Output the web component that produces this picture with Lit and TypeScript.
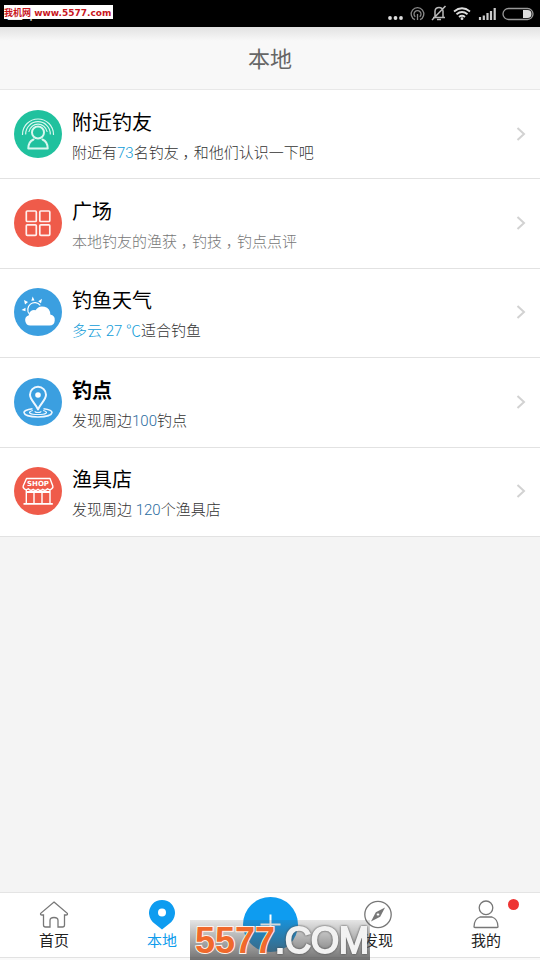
import { LitElement, html, css, svg, nothing } from "lit";
import type { TemplateResult } from "lit";
import { customElement, property } from "lit/decorators.js";
import { classMap } from "lit/directives/class-map.js";

type Row = {
  tone: string;
  icon: TemplateResult;
  title: string;
  strong?: boolean;
  muted?: boolean;
  text: TemplateResult;
};

const nearbyIcon = svg`
  <g fill="none" stroke="#d9f7ef" stroke-linecap="round">
    <path stroke-width="1.2" d="M8.500 24.500A15.500 15.500 0 0 1 39.500 24.500"/>
    <path stroke-width="1.200" d="M11.700 24A12.200 12.200 0 0 1 36.300 24"/>
    <path stroke-width="1.200" d="M15 21.500A9.200 9.200 0 0 1 33 21.500"/>
    <circle cx="24" cy="22.500" r="6" stroke-width="2"/>
    <path stroke-width="2" stroke-linejoin="round" d="M19.500 29.500C16 31 14.300 34 14.300 38.500H33.700C33.700 34 32 31 28.500 29.500"/>
  </g>`;

const squareIcon = svg`
  <g fill="none" stroke="#fff0ee" stroke-width="1.700">
    <rect x="12.300" y="12" width="10" height="10.500" rx="1"/>
    <rect x="25.800" y="12" width="10" height="10.500" rx="1"/>
    <rect x="12.300" y="25.800" width="10" height="10.500" rx="1"/>
    <rect x="25.800" y="25.800" width="10" height="10.500" rx="1"/>
  </g>`;

const weatherIcon = svg`
  <path d="M15.300 26A7 7 0 1 1 26.300 17.300" fill="none" stroke="#fff" stroke-width="1.200"/>
  <g fill="#fff">
    <path d="M17.300 12.700L18.700 8.500L20.500 12.500zM24.200 13.300L28 10.800L27 15.200zM11 16.500L10 12L14 14zM11.500 23.300L7.500 22L11.500 19.800z"/>
    <path d="M17 37.500A5.300 5.300 0 0 1 14.800 27.200A5.200 5.200 0 0 1 21.500 22.300A8 8 0 0 1 36.300 26.600A5.500 5.500 0 0 1 35.500 37.500z"/>
  </g>`;

const spotIcon = svg`
  <g fill="none" stroke="#eef7ff">
    <path stroke-width="1.600" d="M18.500 30.800C12 31.500 9.800 33.200 10 34.600C10.500 37.500 17 39 24 39S37.500 37.500 38 34.600C38 33.200 36 31.500 29.500 30.800"/>
    <path stroke-width="1.200" d="M18.800 32.500C12.500 34.300 16 36.500 24 36.500S35.500 34.300 29.200 32.500"/>
    <path stroke-width="1.200" d="M21 33.200Q21 34.500 24 34.500T27 33.200"/>
    <path stroke-width="2" stroke-linejoin="round" d="M24 31.500C22 26 16 22 16 16.800A8 8 0 0 1 32 16.800C32 22 26 26 24 31.500z"/>
    <circle cx="24" cy="17" r="2.800" fill="#fff" stroke="none"/>
  </g>`;

const shopIcon = svg`
  <g fill="none" stroke="#fff" stroke-width="1.400" stroke-linejoin="round">
    <path d="M12.500 11.500H36L38.800 19V20.500Q36.500 24 33.500 21.800Q31 24.500 28.700 22.300Q26.300 24.500 24 22.300Q21.600 24.500 19.200 22.300Q17 24.500 14.300 21.800Q11.500 24 9.200 20.500V19z"/>
    <path d="M12.300 22.500V36M20 23.500V36M28 23.500V36M36 22.500V36"/>
    <path stroke-width="1.800" d="M12.300 25H36M9.500 36.800H38.800"/>
  </g>
  <text class="shop" x="24" y="18.500" text-anchor="middle">SHOP</text>`;

const comma = html`<span class="comma">，</span>`;

const rows: Row[] = [
  { tone: "green", icon: nearbyIcon, title: "附近钓友",
    text: html`附近有<span class="cyan">73</span>名钓友${comma}和他们认识一下吧` },
  { tone: "red", icon: squareIcon, title: "广场", muted: true,
    text: html`本地钓友的渔获${comma}钓技${comma}钓点点评` },
  { tone: "blue", icon: weatherIcon, title: "钓鱼天气",
    text: html`<span class="cyan">多云 27 ℃</span>适合钓鱼` },
  { tone: "blue", icon: spotIcon, title: "钓点", strong: true,
    text: html`发现周边<span class="steel">100</span>钓点` },
  { tone: "red", icon: shopIcon, title: "渔具店",
    text: html`发现周边 <span class="steel">120</span>个渔具店` },
];

const homeIcon = svg`<path d="M15 3L28.300 14.300Q29 16 27 16H25.500V26Q25.500 28 23.500 28H19V21.500Q19 18.500 15 18.500T11 21.500V28H6.500Q4.500 28 4.500 26V16H3Q1 16 1.700 14.300z"/>`;
const pinIcon = svg`<path class="solid" d="M15 30.500L7.500 24.500A13 13 0 1 1 22.500 24.500z"/><circle class="hole" cx="15" cy="13.500" r="4"/>`;
const compassIcon = svg`<circle cx="15" cy="15.500" r="13.200"/><path class="needle" d="M22 8.500L17.200 17.700L8 22.500L12.800 13.300z"/><circle class="eye" cx="15" cy="15.500" r="1.700"/>`;
const meIcon = svg`<circle cx="15" cy="8.800" r="6.800"/><path d="M9 18H21Q27 20 27 28Q27 28.500 26 28.500H4Q3 28.500 3 28Q3 20 9 18z"/>`;

@customElement("status-bar")
class StatusBar extends LitElement {
  static styles = css`
    :host {
      display: flex;
      position: relative;
      justify-content: space-between;
      height: 27px;
      padding: 0 6px 0 7px;
      background: #000;
      color: #eee;
      font: 16px/28px Roboto, "Noto Sans CJK SC", sans-serif;
    }
    .signals { display: block; flex: none; }
    .site {
      position: absolute;
      left: 4px;
      top: 5px;
      width: 109px;
      height: 14px;
      background: #fff;
      color: #c8161d;
      font: bold 9px/16px "DejaVu Sans", "Noto Sans CJK SC", sans-serif;
      white-space: nowrap;
      text-decoration: none;
    }
  `;
  render() {
    return html`
      <span class="time">上午10:52</span>
      <svg class="signals" width="148" height="27" viewBox="386 0 148 27" aria-hidden="true">
        <g fill="#ddd"><circle cx="390" cy="18" r="1.900"/><circle cx="395.500" cy="18" r="1.900"/><circle cx="401" cy="18" r="1.900"/></g>
        <g fill="none" stroke="#888" stroke-width="1.300">
          <path d="M415 19.700A6.300 6.300 0 1 1 420 19.700"/><path d="M415.300 16.800A3.500 3.500 0 1 1 419.700 16.800"/><path d="M417.500 14V20"/>
        </g>
        <g fill="none" stroke="#bbb" stroke-width="1.500">
          <path d="M433 17.500H445M435 17V11Q435.500 7.500 439 7.500T443 11V17M445.500 6L432 20"/><path d="M437 19.500H441"/>
        </g>
        <g fill="none" stroke="#ddd" stroke-width="1.800">
          <path d="M454 11.500Q462 5 470 11.500M456.500 14.300Q462 9.800 467.500 14.300M459 17Q462 14.500 465 17"/>
        </g>
        <circle cx="462" cy="18.700" r="1.400" fill="#ddd"/>
        <path d="M480 20V17M483.800 20V15.500M487.500 20V13M491 20V11M494.700 20V8" stroke="#ccc" stroke-width="2.200"/>
        <rect x="503" y="8.500" width="30" height="11" rx="5.500" fill="none" stroke="#999" stroke-width="1.300"/>
        <path d="M523 10H527.500A4 4 0 0 1 527.500 18H523z" fill="#ddd"/>
      </svg>
      <a class="site" href="#">我机网 www.5577.com</a>
    `;
  }
}

@customElement("local-row")
class LocalRow extends LitElement {
  @property({ attribute: false }) row!: Row;
  static styles = css`
    :host { display: grid; border-bottom: 1px solid #e2e2e2; background: #fff; }
    .row {
      display: flex;
      align-items: center;
      gap: 10px;
      padding: 0 14px 1px;
      color: inherit;
      text-decoration: none;
    }
    .badge { flex: none; width: 48px; height: 48px; border-radius: 50%; }
    .green { background: #20c19e; }
    .red { background: #ef5b4a; }
    .blue { background: #3b9fe0; }
    .copy { flex: 1; min-width: 0; padding-top: 8px; }
    .title { margin: 0; font-size: 20px; line-height: 30px; font-weight: 400; color: #000; }
    .strong { font-weight: 700; }
    .text { margin: 0; font-size: 15px; line-height: 30px; font-weight: 300; color: #333; }
    .muted { color: #777; }
    .comma {
      display: inline-block;
      width: 15px;
      text-align: center;
      line-height: 20px;
      font-feature-settings: "halt";
    }
    .cyan { color: #0f9cd8; }
    .steel { color: #2a6ca0; }
    .shop { font: 900 7px "DejaVu Sans", sans-serif; fill: #fff; }
    .arrow { flex: none; width: 10px; height: 16px; fill: none; stroke: #d2d2d2; stroke-width: 2; }
  `;
  render() {
    const r = this.row;
    return html`
      <a class="row" href="#">
        <svg class="badge ${r.tone}" viewBox="0 0 48 48" aria-hidden="true">${r.icon}</svg>
        <div class="copy">
          <h2 class=${classMap({ title: true, strong: !!r.strong })}>${r.title}</h2>
          <p class=${classMap({ text: true, muted: !!r.muted })}>${r.text}</p>
        </div>
        <svg class="arrow" viewBox="0 0 10 16" aria-hidden="true"><path d="M1.500 2L8 8L1.500 14"/></svg>
      </a>
    `;
  }
}

@customElement("tab-bar")
class TabBar extends LitElement {
  static styles = css`
    :host {
      display: block;
      position: relative;
      padding-bottom: 2px;
      background: #f9f9f9;
      border-top: 1px solid #e4e4e4;
    }
    .tabs {
      display: grid;
      grid-template-columns: repeat(5, 1fr);
      height: 64px;
      background: #fff;
      border-bottom: 1px solid #e2e2e2;
    }
    .tab {
      display: flex;
      position: relative;
      flex-direction: column;
      align-items: center;
      padding: 6px 0 0;
      border: 0;
      background: none;
      color: #222;
      font: 15px/20px Roboto, "Noto Sans CJK SC", sans-serif;
    }
    .active { color: #0e9cec; }
    .icon { width: 30px; height: 32px; fill: none; stroke: #777; stroke-width: 1.3; }
    .solid { fill: #0e9cf0; stroke: none; }
    .hole { fill: #fff; stroke: none; }
    .needle { fill: #777; stroke: none; }
    .eye { fill: #fff; stroke: #777; stroke-width: 1; }
    .add { padding-top: 4px; }
    .plus { width: 55px; height: 55px; border-radius: 50%; background: #0e9cf0; stroke: #fff; stroke-width: 2; }
    .dot {
      position: absolute;
      top: 6px;
      right: 21px;
      width: 11px;
      height: 11px;
      border-radius: 50%;
      background: #ee3433;
    }
    .brand {
      display: flex;
      position: absolute;
      left: 50%;
      bottom: 0;
      width: 180px;
      height: 40px;
      margin-left: -80px;
      padding-left: 5px;
      box-sizing: border-box;
      overflow: hidden;
      background: linear-gradient(rgba(80, 80, 80, 0.15), rgba(80, 80, 80, 0.8));
      font: 36px/42px "Liberation Sans", sans-serif;
      white-space: nowrap;
      pointer-events: none;
    }
    .digits, .com { -webkit-text-stroke: 2px; paint-order: stroke; stroke-linejoin: round; }
    .digits {
      color: #f0692c;
      font-weight: 700;
      -webkit-text-stroke-color: #fff3ea;
    }
    .com {
      color: #f2f2f2;
      -webkit-text-stroke-color: #f2f2f2;
      filter: drop-shadow(0 0 1px #444);
    }
  `;
  tab(label: string, icon: TemplateResult, active = false, dot = false) {
    return html`
      <button class=${classMap({ tab: true, active })} type="button">
        <svg class="icon" viewBox="0 0 30 32" aria-hidden="true">${icon}</svg>
        <span>${label}</span>
        ${dot ? html`<i class="dot"></i>` : nothing}
      </button>`;
  }
  render() {
    return html`
      <nav class="tabs">
        ${this.tab("首页", homeIcon)}
        ${this.tab("本地", pinIcon, true)}
        <button class="tab add" type="button" aria-label="发布">
          <svg class="plus" viewBox="0 0 55 55" aria-hidden="true"><path d="M27.500 17.500V37.500M17.500 27.500H37.500"/></svg>
        </button>
        ${this.tab("发现", compassIcon)}
        ${this.tab("我的", meIcon, false, true)}
      </nav>
      <div class="brand"><span class="digits">5577</span><span class="com">.COM</span></div>
    `;
  }
}

@customElement("app-root")
class AppRoot extends LitElement {
  static styles = css`
    :host {
      display: flex;
      flex-direction: column;
      min-height: 100vh;
      background: #f4f4f4;
      font-family: Roboto, "Noto Sans CJK SC", sans-serif;
    }
    .head {
      display: grid;
      place-items: center;
      height: 58px;
      padding-top: 4px;
      border-bottom: 1px solid #e8e8e8;
      background: linear-gradient(#e2e2e2, #f8f8f8 14px);
    }
    .name { margin: 0; font-size: 22px; line-height: 32px; font-weight: 400; color: #666; }
    .list { display: grid; grid-auto-rows: 1fr; min-height: 447px; }
    .rest { flex: 1; }
  `;
  render() {
    return html`
      <status-bar></status-bar>
      <header class="head"><h1 class="name">本地</h1></header>
      <main class="list">${rows.map((r) => html`<local-row .row=${r}></local-row>`)}</main>
      <div class="rest"></div>
      <tab-bar></tab-bar>
    `;
  }
}
